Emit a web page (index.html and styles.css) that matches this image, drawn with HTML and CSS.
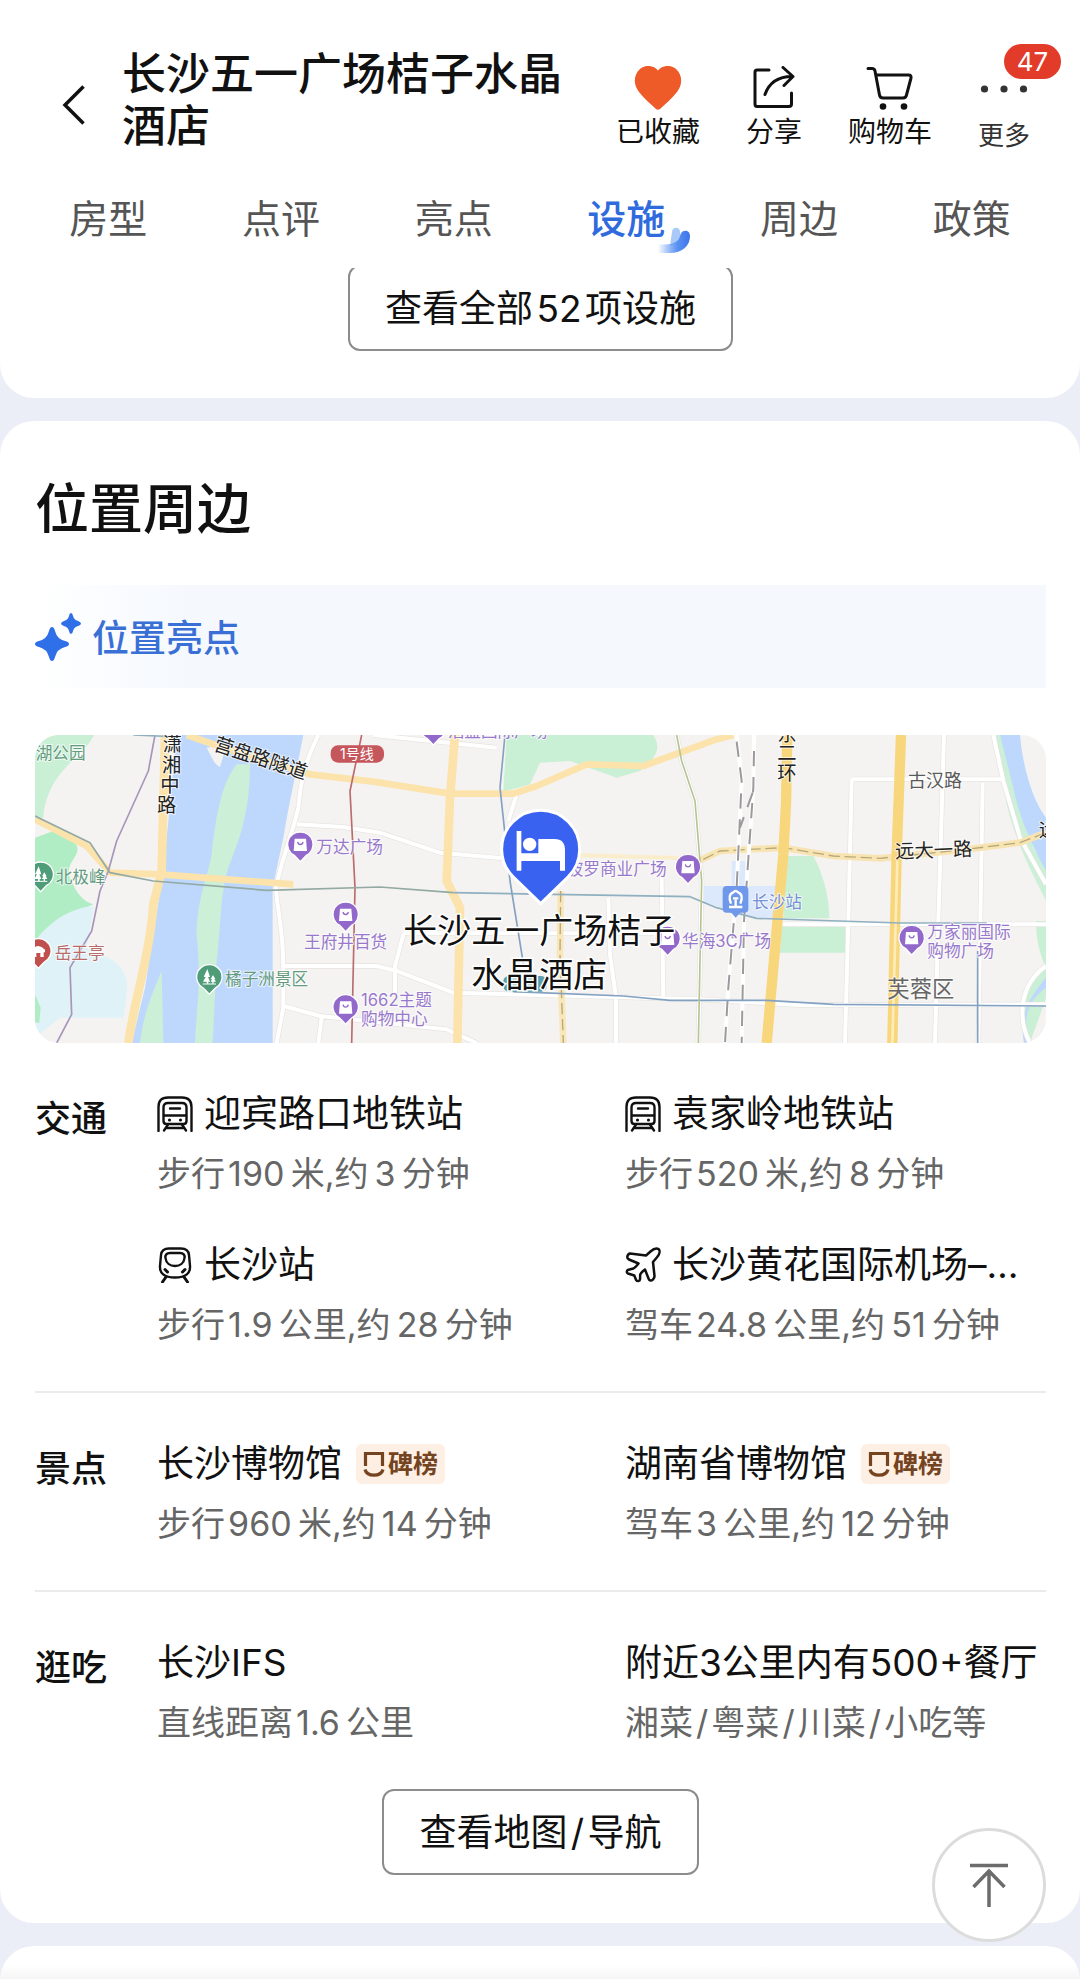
FILE: index.html
```html
<!DOCTYPE html>
<html lang="zh-CN">
<head>
<meta charset="utf-8">
<meta name="viewport" content="width=device-width, initial-scale=1">
<title>长沙五一广场桔子水晶酒店</title>
<link rel="stylesheet" href="styles.css">
</head>
<body>
<svg class="defs" aria-hidden="true">
  <defs>
    <symbol id="i-metro" viewBox="0 0 36 36">
      <g fill="none" stroke="currentColor" stroke-width="2.4" stroke-linecap="round" stroke-linejoin="round">
        <path d="M1.500 35V11C1.500 4 5 1.500 11 1.500H25C31 1.500 34.500 4 34.500 11V35"/>
        <path d="M11 7H25C28 7 29.500 8.500 29.500 11.500V25C29.500 27 28.500 28 26.500 28H9.500C7.500 28 6.500 27 6.500 25V11.500C6.500 8.500 8 7 11 7Z"/>
        <path d="M7 19.500H29M13 12.500H23M11 28.500L7 34.500M25 28.500L29 34.500M10 32H26"/>
      </g>
      <circle cx="12.500" cy="24" r="1.600" fill="currentColor"/><circle cx="23.500" cy="24" r="1.600" fill="currentColor"/>
    </symbol>
    <symbol id="i-train" viewBox="0 0 36 36">
      <g fill="none" stroke="currentColor" stroke-width="2.4" stroke-linecap="round" stroke-linejoin="round">
        <path d="M12 1.500H24C29 1.500 31.500 3.500 32 8L33 19C33.500 26 29 30.500 18 30.500S2.500 26 3 19L4 8C4.500 3.500 7 1.500 12 1.500Z"/>
        <path d="M13 6H23C26.500 6 28 8 27.500 11C27 16 23 19 18 19S9 16 8.500 11C8 8 9.500 6 13 6Z"/>
        <path d="M8 22.500L10.500 25M28 22.500L25.500 25M9 30L5.500 35M27 30L30.500 35" stroke-width="3"/>
      </g>
    </symbol>
    <symbol id="i-plane" viewBox="0 0 36 36">
      <path d="M21 8.500L25.500 4.500C28.500 1.800 32 1 33.800 2.300C35.300 4 34.500 7.500 31.800 10.500L28 15L29.500 29C29.700 31.500 27 33.800 25.300 33.500C24.300 33.300 23.900 32.500 23.500 31.500L20 22.500C18 24 16 25.500 15.200 27.500L15 32.500C14.800 34.500 12 34.500 11 32.800L9.300 28.500L3 26.500C1.200 25.800 1.500 23.500 3.500 22.800L8.500 21.500C10.500 20.500 11.800 18.500 13.500 16.500L4 12.500C1.500 11.500 1.800 7.500 5 6.500Z" fill="none" stroke="currentColor" stroke-width="2.500" stroke-linejoin="round"/>
    </symbol>
    <symbol id="i-smile" viewBox="0 0 22 26">
      <path d="M2.500 15V2.500H19.500V15" fill="none" stroke="currentColor" stroke-width="3.200"/>
      <path d="M2 18.500C4 26 18 26 20 18.500" fill="none" stroke="currentColor" stroke-width="3.200"/>
    </symbol>
    <g id="p-body"><path d="M0-37A37 37 0 0 1 18 33L0 52L-18 33A37 37 0 0 1 0-37Z"/></g>
    <g id="p-shop">
      <use href="#p-body" fill="#9268cb" stroke="#fff" stroke-width="4"/>
      <path d="M-17-17H17L20 20H-20Z" fill="#fff"/><path d="M-8-7C-6 3 6 3 8-7" fill="none" stroke="#9268cb" stroke-width="4"/>
    </g>
    <g id="p-park">
      <use href="#p-body" fill="#4f9c78" stroke="#fff" stroke-width="4"/>
      <path d="M-6-24L-17 0H-11L-19 14H-8V20H-3V14H2L-4 0H2ZM11-6L4 6H8L4 14H9V20H13V14H20L15 6H18Z" fill="#fff"/><path d="M-20 21H20" stroke="#fff" stroke-width="3"/>
    </g>
  </defs>
</svg>

<header class="topbar">
  <div class="topbar__row">
    <button class="back" type="button" aria-label="返回">
      <svg width="24" height="40" viewBox="0 0 24 40" fill="none" stroke="#111" stroke-width="3.500"><path d="M21.500 1.500L3 20L21.500 38.500"/></svg>
    </button>
    <h1 class="topbar__title">长沙五一广场桔子水晶酒店</h1>
    <div class="actions">
      <button class="action" type="button">
        <svg width="48" height="44" viewBox="0 0 48 44"><path d="M24 4.500C28-1 37-1.500 42 3C49 9.500 48.500 19 43 26C38 32.500 31 38.500 26 43Q24 44.500 22 43C17 38.500 10 32.500 5 26C-.500 19-1 9.500 6 3C11-1.500 20-1 24 4.500Z" fill="#ee5a28"/></svg>
        <span>已收藏</span>
      </button>
      <button class="action" type="button">
        <svg width="44" height="44" viewBox="0 0 44 44" fill="none" stroke="#111" stroke-width="3" stroke-linecap="round" stroke-linejoin="round"><path d="M17 4H5Q3 4 3 6V38Q3 40.500 5 40.500H37Q39.500 40.500 39.500 38V27M13 28.500C17 17 25 10.500 40 10.500M31 1.500L41 10.500L32 19.500"/></svg>
        <span>分享</span>
      </button>
      <button class="action" type="button">
        <svg width="48" height="44" viewBox="0 0 48 44"><path d="M2 2.500H6Q8.500 2.500 9 5L13.500 29Q14 32 17 32H37Q40 32 40.500 29L45 12Q45.500 9 42.500 9H10" fill="none" stroke="#111" stroke-width="3" stroke-linecap="round" stroke-linejoin="round"/><circle cx="17" cy="40.500" r="3.300" fill="#111"/><circle cx="38" cy="40.500" r="3.300" fill="#111"/></svg>
        <span>购物车</span>
      </button>
      <button class="action action--more" type="button">
        <svg width="48" height="44" viewBox="0 0 48 44" fill="#333"><circle cx="4.500" cy="23" r="3.600"/><circle cx="24" cy="23" r="3.600"/><circle cx="43.500" cy="23" r="3.600"/></svg>
        <span>更多</span>
        <span class="badge">47</span>
      </button>
    </div>
  </div>
  <nav class="tabs">
    <a class="tab" href="#rooms">房型</a>
    <a class="tab" href="#reviews">点评</a>
    <a class="tab" href="#highlights">亮点</a>
    <a class="tab tab--active" href="#facilities" aria-current="true"><span class="tab__label">设施<svg class="tab__mark" width="34" height="28" viewBox="0 0 34 28" aria-hidden="true">
      <defs><linearGradient id="swoosh" x1="0" x2="1"><stop offset="0" stop-color="#4b86f0" stop-opacity="0"/><stop offset=".6" stop-color="#5a92f2"/><stop offset="1" stop-color="#3b74ea"/></linearGradient></defs>
      <path d="M14 6C14 1 21 0 22 5L22 14L12 20Z" fill="#a9c9f8"/>
      <path d="M0 18C14 20 21 16 22 10C23 3 32 3 32 10C32 20 24 27 12 27H0Z" fill="url(#swoosh)"/></svg></span></a>
    <a class="tab" href="#nearby">周边</a>
    <a class="tab" href="#policy">政策</a>
  </nav>
</header>

<main>
  <section class="card card--facilities" id="facilities">
    <button class="outline-btn" type="button">查看全部&#8202;52&#8202;项设施</button>
  </section>

  <section class="card card--location" id="nearby">
    <h2 class="card__title">位置周边</h2>
    <div class="highlight" id="highlights">
      <svg width="48" height="48" viewBox="0 0 48 48" fill="#2f6fe8" aria-hidden="true"><path d="M17 14Q19 14 20 18Q22 26 30 28Q34 29 34 31Q34 33 30 34Q22 36 20 44Q19 48 17 48Q15 48 14 44Q12 36 4 34Q0 33 0 31Q0 29 4 28Q12 26 14 18Q15 14 17 14Z"/><path d="M36 0Q37.500 0 38 3Q39 7 43 8Q46 9 46 10.500Q46 12 43 13Q39 14 38 18Q37.500 21 36 21Q34.500 21 34 18Q33 14 29 13Q26 12 26 10.500Q26 9 29 8Q33 7 34 3Q34.500 0 36 0Z"/></svg>
      <h3 class="highlight__text">位置亮点</h3>
    </div>

    <svg class="map" viewBox="45 42 3033 924" role="img" aria-label="酒店周边地图">
      <rect x="45" y="42" width="3033" height="924" fill="#f5f3f1"/>
      <!-- parks -->
      <g fill="#c9efd5">
        <path d="M45 42H222C190 110 80 150 70 290H45Z"/>
        <path d="M1460 42H1900C1925 80 1910 110 1860 150L1790 170L1650 120L1560 125L1530 190L1450 212Z"/>
        <path d="M2300 405H2380C2410 460 2428 530 2428 592H2290ZM2285 615H2475V695H2280Z"/>
      </g>
      <path d="M45 350L100 330L160 360C200 400 130 420 150 470C170 520 190 540 220 550L130 590L45 660Z" fill="#b0edc4"/>
      <path d="M45 660C100 590 160 560 222 555L200 680C260 710 320 720 322 800L310 890H120L45 950Z" fill="#dff2f7"/>
      <path d="M45 820L62 860L58 905H45Z" fill="#b0edc4"/>
      <!-- river and islands -->
      <path d="M470 42H850C830 150 810 230 790 350L758 500V966H335L375 800L400 640L430 450L450 250Z" fill="#bed8fd"/>
      <path d="M560 80L620 70L600 138Q585 130 578 115Z" fill="#f5f3f1"/>
      <path d="M690 130C690 250 670 330 625 440C600 520 605 600 590 720L578 966H525C530 850 545 800 530 640C530 540 560 480 575 400C590 260 610 180 650 130ZM425 750L430 966H360C370 880 395 820 425 750Z" fill="#cbefd7"/>
      <path d="M2925 42H2945L2990 210L3040 380L3078 440V540C3060 500 2990 380 2960 250Z" fill="#cbefd7"/>
      <path d="M2940 42H3000C3010 150 3040 240 3078 290V450C3040 380 3000 300 2980 200Z" fill="#bed8fd"/>
      <path d="M3048 600H3078V740C3060 700 3048 660 3048 600ZM3078 740L3020 800L3005 900L3030 966L3078 830Z" fill="#c9efd5"/>
      <path d="M3078 800C3020 840 3005 900 3030 966H3012C3000 900 3010 850 3078 770Z" fill="#bed8fd"/>
      <path d="M2040 495H2285V590H2210L2040 540ZM2135 420H2175V500H2135Z" fill="#dce8fb"/>
      <!-- minor roads -->
      <g fill="none" stroke="#e6e4e1" stroke-width="16">
        <path d="M895 42C850 130 842 190 835 260C820 330 780 430 768 500C770 560 790 620 790 740V860L770 966M830 310L970 318L1080 335L1260 395L1450 412M790 735H1070L1130 750L1300 815L2040 835L2340 852L3078 850M790 855L900 885L1280 925L1370 966M905 890L895 966M1150 640L1125 735V820M1150 637H1910M1925 470L1930 830M1765 530L1770 700L1788 830V966M1490 220L1465 300M1060 42L1430 80M2495 175H2950M2495 175L2485 600L2475 966M2772 42L2755 600L2745 966M2888 185L2875 966M2290 610H3078M1970 42L1985 120L2025 240L2045 480L2035 966M2920 42L2950 180L3000 350L3078 490M3078 735C3000 790 2990 890 3030 966"/>
      </g>
      <g fill="none" stroke="#fff" stroke-width="12">
        <path d="M895 42C850 130 842 190 835 260C820 330 780 430 768 500C770 560 790 620 790 740V860L770 966M830 310L970 318L1080 335L1260 395L1450 412M790 735H1070L1130 750L1300 815L2040 835L2340 852L3078 850M790 855L900 885L1280 925L1370 966M905 890L895 966M1150 640L1125 735V820M1150 637H1910M1925 470L1930 830M1765 530L1770 700L1788 830V966M1490 220L1465 300M1060 42L1430 80M2495 175H2950M2495 175L2485 600L2475 966M2772 42L2755 600L2745 966M2888 185L2875 966M2290 610H3078M1970 42L1985 120L2025 240L2045 480L2035 966M2920 42L2950 180L3000 350L3078 490M3078 735C3000 790 2990 890 3030 966"/>
      </g>
      <!-- main roads -->
      <g fill="none" stroke="#fbe3ab" stroke-width="20" stroke-linejoin="round">
        <path d="M435 42L425 450L400 550C390 700 340 850 325 966" stroke-width="26"/>
        <path d="M45 295L200 375L270 455L420 460L820 490"/>
        <path d="M500 42L640 90L870 160L1060 182L1290 218H1480L1550 195L1700 130L1870 135L1980 95L2080 58L2140 42"/>
        <path d="M1305 42L1290 230L1280 480L1320 560L1312 966" stroke-width="26"/>
        <path d="M1622 510L1620 700L1630 966" stroke="#f8e7bb"/>
        <path d="M1570 400L1950 410L2050 415" stroke="#faedcb" stroke-width="12"/>
        <path d="M2040 418L2100 390L2290 380L2440 405L2580 412L2840 385L3000 365L3078 335" stroke="#f8e4b3"/>
      </g>
      <g fill="none" stroke="#b8a878" stroke-width="4" stroke-dasharray="34 14"><path d="M2050 415L2100 390L2290 380L2440 405L2580 412L2840 385L3000 365L3078 335M1622 510L1620 700L1630 966"/></g>
      <g fill="none" stroke="#f7d67c" stroke-width="31"><path d="M2302 42L2298 250L2290 400L2240 966M2643 42L2630 400L2617 966"/></g>
      <path d="M2632 420L2617 966" stroke="#fdebb8" stroke-width="8"/>
      <!-- railway -->
      <g fill="none" stroke="#fff" stroke-width="12"><path d="M2150 42L2165 180L2150 500L2125 800L2115 966M2202 42L2200 200L2172 600L2165 966"/></g>
      <g fill="none" stroke="#9a9a9d" stroke-width="6" stroke-dasharray="46 32"><path d="M2150 62L2165 180L2150 500L2125 800L2115 966M2202 90L2200 200L2172 600L2165 966M2198 215L2160 320"/></g>
      <!-- metro lines -->
      <g fill="none" stroke-width="5" stroke-linejoin="round">
        <path d="M405 42L385 150L290 360L265 450L240 510L215 630L150 740L155 880L110 966" stroke="#a796bb"/>
        <path d="M1025 42L990 210L1005 500L995 966" stroke="#b96d6d"/>
        <path d="M45 285L210 365L270 455L400 480L740 508L1080 498L1300 515" stroke="#93a9a3"/>
        <path d="M1300 515L2010 527L2090 560L2210 592L2640 606L2900 606M340 42L480 48" stroke="#8fb0c0"/>
        <path d="M1455 42L1440 200L1470 480L1512 740M1480 812L1810 825L1950 838L2240 838L2440 850L3078 855M2873 690V966" stroke="#83a2c2"/>
        <path d="M1970 42L1985 120L2025 240L2045 480L2035 966" stroke="#b5c592"/>
      </g>
      <rect x="1450" y="765" width="130" height="47" rx="16" fill="#5b9dab"/>
      <rect x="932" y="73" width="160" height="52" rx="22" fill="#c5565c"/>
      <!-- places -->
      <use href="#p-park" x="62" y="460"/><use href="#p-park" x="568" y="768"/>
      <g transform="translate(55 690)"><use href="#p-body" fill="#c0504e" stroke="#fff" stroke-width="4"/><path d="M-20-4Q0-26 20-4V4H16V18H6V6H-6V18H-16V4H-20Z" fill="#fff"/></g>
      <use href="#p-shop" x="841" y="370"/><use href="#p-shop" x="977" y="580"/><use href="#p-shop" x="977" y="858"/><use href="#p-shop" x="1240" y="20"/><use href="#p-shop" x="2004" y="437"/><use href="#p-shop" x="1943" y="652"/><use href="#p-shop" x="2675" y="650"/>
      <path d="M2120 495H2173Q2185 495 2185 507V563Q2185 575 2173 575H2160L2147 590L2134 575H2120Q2108 575 2108 563V507Q2108 495 2120 495Z" fill="#6f97ea"/>
      <path d="M2133 548Q2122 520 2140 514Q2147 506 2154 514Q2172 520 2161 548M2147 536V558M2127 558H2167M2139 532H2155" fill="none" stroke="#fff" stroke-width="7"/>

      <g class="map__label map__label--shop">
        <text x="889" y="396">万达广场</text><text x="852" y="680">王府井百货</text>
        <text x="1023" y="856">1662主题</text><text x="1023" y="912">购物中心</text>
        <text x="1590" y="462">阿波罗商业广场</text><text x="1986" y="678">华海3C广场</text>
        <text x="2722" y="650">万家丽国际</text><text x="2722" y="708">购物广场</text>
        <text x="1283" y="48">浩盛国际广场</text>
      </g>
      <g class="map__label map__label--park"><text x="47" y="113">湖公园</text><text x="107" y="486">北极峰</text><text x="615" y="793">橘子洲景区</text></g>
      <text class="map__label map__label--temple" x="104" y="715">岳王亭</text>
      <text class="map__label map__label--station" x="2196" y="560">长沙站</text>
      <text class="map__label map__label--line" x="960" y="115">1号线</text>
      <text class="map__label map__label--street" x="2664" y="197">古汉路</text>
      <text class="map__label map__label--district" x="2602" y="829">芙蓉区</text>
      <g class="map__label map__label--road">
        <text x="428" y="91">潇</text><text x="426" y="152">湘</text><text x="421" y="212">中</text><text x="411" y="273">路</text>
        <text transform="translate(578 86) rotate(18)">营盘路隧道</text>
        <text x="2272" y="60">东</text><text x="2272" y="117">二</text><text x="2272" y="176">环</text>
        <text transform="translate(2626 412) rotate(-2)">远大一路</text><text x="3056" y="348">远</text>
      </g>
      <!-- hotel marker -->
      <path d="M1562 548L1480 468A117 117 0 1 1 1644 468Z" fill="#3a62f0" stroke="#fff" stroke-width="9" stroke-linejoin="round"/>
      <path d="M1490 330H1504V397H1555V354H1604Q1635 354 1635 388V449H1620V420H1504V449H1490Z" fill="#fff"/><circle cx="1529" cy="370" r="20" fill="#fff"/>
      <text class="map__hotel" x="1558" y="666">长沙五一广场桔子</text>
      <text class="map__hotel" x="1558" y="798">水晶酒店</text>
    </svg>

    <div class="group">
      <h3 class="group__name">交通</h3>
      <ul class="group__list">
        <li><p class="place"><svg class="place__icon"><use href="#i-metro"/></svg>迎宾路口地铁站</p><p class="note">步行&#8202;190&#8201;米,约&#8201;3&#8201;分钟</p></li>
        <li><p class="place"><svg class="place__icon"><use href="#i-metro"/></svg>袁家岭地铁站</p><p class="note">步行&#8202;520&#8201;米,约&#8201;8&#8201;分钟</p></li>
        <li><p class="place"><svg class="place__icon"><use href="#i-train"/></svg>长沙站</p><p class="note">步行&#8202;1.9&#8201;公里,约&#8201;28&#8201;分钟</p></li>
        <li><p class="place"><svg class="place__icon"><use href="#i-plane"/></svg>长沙黄花国际机场–…</p><p class="note">驾车&#8202;24.8&#8201;公里,约&#8201;51&#8201;分钟</p></li>
      </ul>
    </div>
    <div class="group">
      <h3 class="group__name">景点</h3>
      <ul class="group__list">
        <li><p class="place">长沙博物馆<span class="tag"><svg width="22" height="26" role="img" aria-label="口"><use href="#i-smile"/></svg>碑榜</span></p><p class="note">步行&#8202;960&#8201;米,约&#8201;14&#8201;分钟</p></li>
        <li><p class="place">湖南省博物馆<span class="tag"><svg width="22" height="26" role="img" aria-label="口"><use href="#i-smile"/></svg>碑榜</span></p><p class="note">驾车&#8202;3&#8201;公里,约&#8201;12&#8201;分钟</p></li>
      </ul>
    </div>
    <div class="group">
      <h3 class="group__name">逛吃</h3>
      <ul class="group__list">
        <li><p class="place">长沙IFS</p><p class="note">直线距离&#8202;1.6&#8201;公里</p></li>
        <li><p class="place">附近3公里内有500+餐厅</p><p class="note">湘菜&#8202;/&#8202;粤菜&#8202;/&#8202;川菜&#8202;/&#8202;小吃等</p></li>
      </ul>
    </div>
    <button class="outline-btn" type="button">查看地图&#8202;/&#8202;导航</button>
  </section>

  <section class="card card--next" id="policy"></section>
</main>

<button class="to-top" type="button" aria-label="回到顶部">
  <svg width="40" height="44" viewBox="0 0 40 44" fill="none" stroke="#6c6c6c" stroke-width="3.500"><path d="M1 2.500H39M20 8V44M4.500 24L20 8L35.500 24"/></svg>
</button>
</body>
</html>
```

FILE: styles.css
```css
* { box-sizing: border-box; }

body {
  margin: 0;
  background: #ebeef6;
  color: #111;
  font-family: Inter, "Noto Sans CJK SC", sans-serif;
}

h1, h2, h3, p, ul { margin: 0; padding: 0; font-weight: 500; }
ul { list-style: none; }
button { padding: 0; border: 0; background: none; color: inherit; font: inherit; cursor: pointer; }
svg { display: block; flex: none; }
.defs { position: absolute; width: 0; height: 0; }

/* Top bar */
.topbar { background: #fff; }
.topbar__row {
  display: flex;
  align-items: flex-start;
  padding: 48px 50px 18px 62px;
}
.back { margin: 37px 36px 0 0; }
.topbar__title { flex: 1; margin-right: 30px; font-size: 44px; line-height: 52px; }
.actions { display: flex; gap: 46px; margin-top: 18px; }
.action {
  position: relative;
  display: flex;
  flex-direction: column;
  align-items: center;
  gap: 6px;
  font-size: 28px;
  line-height: 32px;
}
.action--more { gap: 10px; width: 52px; color: #333; font-size: 26px; }
.badge {
  position: absolute;
  top: -22px;
  left: 26px;
  width: 57px;
  border-radius: 18px;
  background: #e23b2a;
  color: #fff;
  font-size: 26px;
  line-height: 35px;
}

.tabs { display: grid; grid-template-columns: repeat(6, 1fr); padding: 0 22px; }
.tab {
  color: #555;
  font-size: 39px;
  line-height: 98px;
  text-align: center;
  text-decoration: none;
}
.tab--active { color: #2f6bdc; font-weight: 500; }
.tab__label { position: relative; display: inline-block; }
.tab__mark { position: absolute; top: 56px; left: 71px; }

/* Cards */
.card {
  display: flex;
  flex-direction: column;
  margin-bottom: 23px;
  padding: 57px 34px 48px 35px;
  border-radius: 34px;
  background: #fff;
}
.card--facilities { overflow: hidden; padding-top: 0; padding-bottom: 47px; border-radius: 0 0 34px 34px; }
.card--facilities .outline-btn { margin-top: -3px; }
.card--next {
  min-height: 35px;
  margin-bottom: 0;
  padding: 0;
  border-radius: 34px 34px 0 0;
  background: linear-gradient(#fff 50%, #f5f5f5);
}
.card__title { font-size: 54px; line-height: 64px; }

.outline-btn {
  align-self: center;
  padding: 1px 35px 0;
  border: 2px solid #8c8c8c;
  border-radius: 12px;
  font-size: 37px;
  line-height: 81px;
}

.highlight {
  display: flex;
  align-items: center;
  margin-top: 43px;
  height: 103px;
  background: linear-gradient(90deg, #fff, #f5f9fe 150px);
}
.highlight__text { margin-left: 9px; padding-top: 4px; color: #3a70d6; font-size: 37px; line-height: 48px; }

/* Map */
.map { width: 100%; margin-top: 47px; border-radius: 24px; }
.map__label { font-size: 50px; paint-order: stroke; stroke: #fff; stroke-opacity: .7; stroke-width: 6px; }
.map__label--shop { fill: #9878cc; }
.map__label--park { fill: #649b80; }
.map__label--temple { fill: #b86c6a; }
.map__label--station { fill: #7590d6; }
.map__label--line { fill: #fff; stroke: none; font-size: 42px; }
.map__label--street { fill: #5a5a5a; font-size: 54px; }
.map__label--district { fill: #666; font-size: 67px; }
.map__label--road { fill: #222; font-size: 58px; }
.map__hotel {
  fill: #111;
  font-size: 102px;
  text-anchor: middle;
  paint-order: stroke;
  stroke: #fff;
  stroke-width: 9px;
}

/* Nearby places */
.group { display: flex; padding: 47px 0 42px; }
.group + .group { border-top: 2px solid #ebebeb; }
.group__name { width: 122px; font-size: 36px; line-height: 58px; font-weight: 500; }
.group__list {
  flex: 1;
  display: grid;
  grid-template-columns: minmax(0, 10fr) minmax(0, 9fr);
  row-gap: 43px;
}
.place {
  display: flex;
  align-items: center;
  font-size: 37px;
  font-weight: 400;
  line-height: 48px;
  white-space: nowrap;
}
.place__icon { width: 36px; height: 36px; margin-right: 11px; }
.note {
  margin-top: 12px;
  color: #666;
  font-size: 34px;
  font-weight: 400;
  line-height: 48px;
  white-space: nowrap;
}
.tag {
  display: flex;
  align-items: center;
  gap: 3px;
  height: 40px;
  margin-left: 14px;
  padding: 0 7px;
  border-radius: 6px;
  background: #fdefe3;
  color: #74431f;
  font-size: 25px;
  font-weight: 700;
}

.to-top {
  position: fixed;
  right: 34px;
  bottom: 37px;
  display: flex;
  align-items: center;
  justify-content: center;
  width: 114px;
  height: 114px;
  border: 3px solid #dcdcdc;
  border-radius: 50%;
  background: #fff;
}
```
